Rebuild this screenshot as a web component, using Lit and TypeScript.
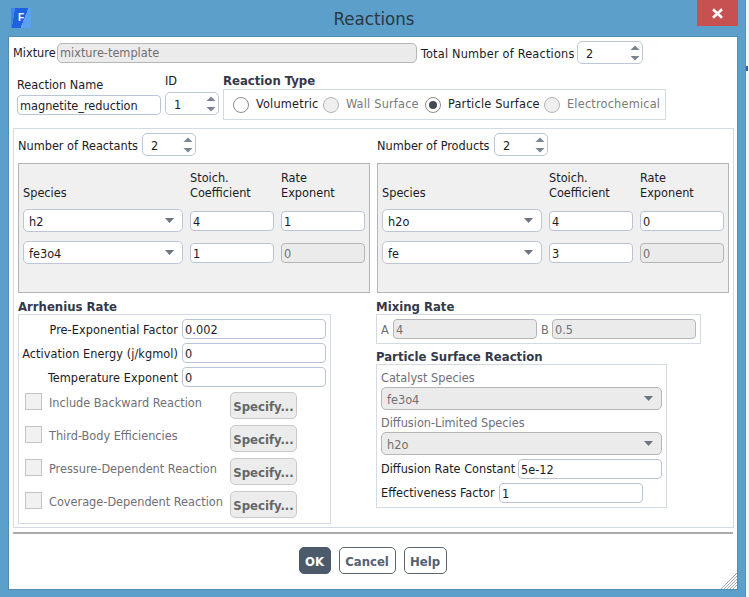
import { LitElement, html, css, svg } from "lit";
import { customElement } from "lit/decorators.js";

const spin = (v: string, cls = "") => html`<div class="spin ${cls}"><span>${v}</span>
  <svg width="10" height="16" viewBox="0 0 10 16"><path d="M5 0.5 9.5 5H.5Z" fill="#7a8492"/><path d="M.5 11H9.5L5 15.5Z" fill="#7a8492"/></svg></div>`;
const sel = (v: string, dis = false, cls = "") => html`<div class="sel ${dis ? "dis" : ""} ${cls}"><span>${v}</span>
  <svg width="9" height="5" viewBox="0 0 9 5"><path d="M0 0H9L4.5 5Z" fill="#6d7480"/></svg></div>`;
const inp = (v: string, dis = false, cls = "") => html`<div class="inp ${dis ? "dis" : ""} ${cls}">${v}</div>`;
const radio = (l: string, cls: string, state = "") => html`<div class="radio ${cls} ${state}"><i></i><span>${l}</span></div>`;

const table = (rows: [string, string, string, boolean][]) => html`<div class="table">
  <div class="th sp">Species</div><div class="th">Stoich.<br />Coefficient</div><div class="th">Rate<br />Exponent</div>
  ${rows.map(([a, b, c, d]) => html`${sel(a)}${inp(b)}${inp(c, d)}`)}
</div>`;

const check = (l: string) => html`<div class="chk"><i></i><span>${l}</span><button>Specify...</button></div>`;

@customElement("app-root")
export class AppRoot extends LitElement {
  static styles = css`
    :host { display: flex; width: 749px; height: 597px; background: #f4f6f6; overflow: hidden;
      font: 12.6px/14px "DejaVu Sans Condensed", "DejaVu Sans", sans-serif; font-stretch: condensed; color: #1b1b26; }
    * { box-sizing: border-box; }
    .win { width: 746px; height: 597px; background: #5b9fca; padding: 0 8px 8px 9px; display: flex; flex-direction: column; border-right: 1px solid #5593bb; flex: none; }
    .strip { flex: 1; padding-top: 66px; }
    .strip i { display: block; width: 2px; height: 5px; background: #2f5f9e; }
    .bar { height: 37px; margin: 0 -1px 0 0; display: grid; grid-template-columns: 1fr auto 1fr; }
    .logo { width: 20px; height: 20px; margin: 8px 0 0 2px; display: flex; align-items: center; justify-content: center;
      background: linear-gradient(100deg, #3f86ea 0 18%, transparent 18%), linear-gradient(112deg, #1f62e0 0 62%, #5aa2f0 62%); color: #fff; font: bold 10px/10px "Liberation Sans", sans-serif; }
    .title { font: 18.5px/37px "DejaVu Sans Condensed", "DejaVu Sans", sans-serif; font-stretch: condensed; color: #2b3742; padding-left: 1px; }
    .x { justify-self: end; width: 41px; height: 26px; background: #c75050; display: flex; align-items: center; justify-content: center; }
    .body { position: relative; flex: 1; background: #fff; padding: 4px 4px 0; display: flex; flex-direction: column; box-shadow: 0 0 0 1px #4f8db5; }
    .r1 { display: flex; align-items: center; height: 23px; }
    .r1 .l1 { width: 44px; white-space: nowrap; }
    .r1 .inp { width: 360px; border-radius: 5px; color: #222; line-height: 18px; }
    .r1 .l2 { width: 160px; padding: 2px 0 0 4px; white-space: nowrap; letter-spacing: .2px; }
    .r1 .spin { width: 66px; }
    .r2 { height: 64px; display: flex; padding-left: 4px; gap: 4px; }
    .c1 { width: 144px; padding-top: 14px; display: flex; flex-direction: column; gap: 3px; }
    .c2 { width: 54px; padding-top: 9px; display: flex; flex-direction: column; gap: 5px; }
    .c2 > span { display: block; height: 14px; line-height: 16px; }
    .c3 { width: 443px; padding-top: 9px; display: flex; flex-direction: column; gap: 2px; }
    b { display: block; height: 14px; line-height: 16px; font-weight: bold; font-size: 13px; color: #33394a; white-space: nowrap; }
    .rt { height: 31px; border: 1px solid #d3dae6; display: flex; align-items: center; padding-left: 9px; }
    .radio { display: flex; align-items: center; gap: 7px; white-space: nowrap; letter-spacing: .2px; }
    .radio span { margin-top: -1px; }
    .radio i { width: 16px; height: 16px; border-radius: 50%; border: 1px solid #8f8f8f; background: #fff; display: flex; align-items: center; justify-content: center; flex: none; }
    .radio.dis i { background: #efefef; border-color: #b4b4b4; }
    .radio.dis { color: #7a7a7a; }
    .radio.on i::after { content: ""; width: 8px; height: 8px; border-radius: 50%; background: #454a52; }
    .rv { width: 90px; } .rw { width: 102px; } .rp { width: 119px; }
    .spin { height: 23px; border: 1px solid #bcc6d6; border-radius: 5px; background: #fff; display: flex; align-items: center; justify-content: space-between; padding: 0 2px 0 8px; }
    .spin > span, .sel > span { padding-top: 2px; }
    .inp { height: 20px; width: 144px; border: 1px solid #b9c4d6; border-radius: 4px; background: #fff; line-height: 20px; padding-left: 2px; flex: none; }
    .inp.dis { background: #ebebeb; border-color: #b6b6b6; color: #707070; }
    .sel { height: 23px; border: 1px solid #bcc6d6; border-radius: 5px; background: #fff; display: flex; align-items: center; justify-content: space-between; padding: 0 8px 0 5px; }
    .sel.dis { background: #ebebeb; border-color: #b6b6b6; color: #707070; }
    .main { height: 400px; width: 721px; border: 1px solid #d3dae6; padding: 4px; }
    .top { display: flex; gap: 7px; }
    .side { width: 352px; }
    .num { display: flex; align-items: center; height: 23px; margin-bottom: 7px; }
    .num .spin { width: 54px; }
    .num span.lb { width: 124px; padding-top: 2px; white-space: nowrap; }
    .num.p span.lb { width: 117px; }
    .table { height: 130px; background: #f0f0f0; border: 1px solid #b4b4b4; padding: 6px 4px 0; display: grid; grid-template-columns: 160px 84px 84px; column-gap: 7px; row-gap: 9px; grid-template-rows: 30px 23px 23px; align-items: center; align-content: start; }
    .th { line-height: 15px; align-self: start; white-space: nowrap; }
    .th.sp { padding-top: 15px; }
    .table .inp { width: 84px; }
    .bot { display: flex; margin-top: 6px; }
    .lc { width: 358px; }
    .rc { width: 340px; }
    .hd { height: 15px; }
    .arr { width: 313px; height: 210px; border: 1px solid #d3dae6; padding: 4px; display: flex; flex-direction: column; }
    .fr { display: flex; justify-content: flex-end; gap: 4px; height: 20px; line-height: 22px; margin-bottom: 4px; white-space: nowrap; letter-spacing: .06px; }
    .chks { display: flex; flex-direction: column; gap: 6px; padding-left: 2px; margin-top: 1px; }
    .chk { display: grid; grid-template-columns: 17px 174px 67px; column-gap: 7px; height: 27px; color: #6f6f78; }
    .chk i { width: 17px; height: 17px; margin-top: 1px; border: 1px solid #c4c4c4; background: #f1f1f1; }
    .chk span { padding-top: 4px; white-space: nowrap; }
    .chk button { width: 67px; height: 27px; margin: 0; padding: 2px 0 0; border: 1px solid #c9c9c9; border-radius: 5px; background: #ececec; color: #666; font: bold 13px/23px "DejaVu Sans Condensed", "DejaVu Sans", sans-serif; font-stretch: condensed; }
    .mix { width: 325px; height: 30px; border: 1px solid #d3dae6; padding: 4px; display: flex; color: #6f6f78; line-height: 22px; }
    .mix .a { width: 12px; } .mix .b { width: 15px; padding-left: 4px; }
    .hd2 { margin-top: 5px; height: 15px; }
    .psr { width: 291px; height: 144px; border: 1px solid #d3dae6; padding: 0 4px; display: flex; flex-direction: column; }
    .psr .g { color: #6f6f78; margin-top: 6px; margin-bottom: 2px; height: 14px; line-height: 14px; white-space: nowrap; }
    .psr .fld { display: flex; height: 20px; line-height: 20px; margin-top: 4px; white-space: nowrap; }
    .psr .f1 { width: 137px; } .psr .f2 { width: 118px; }
    .sep { height: 2px; background: #ababab; margin-top: 4px; }
    .foot { display: flex; justify-content: center; gap: 8px; margin: 13px 0 0 -1px; }
    .foot button { height: 27px; margin: 0; padding: 2px 0 0; border: 1px solid #5a6572; border-radius: 5px; background: #fff; color: #566170; font: bold 13px/23px "DejaVu Sans Condensed", "DejaVu Sans", sans-serif; font-stretch: condensed; }
    .foot .ok { width: 32px; background: #4c5a6c; color: #fff; border-color: #4c5a6c; }
    .foot .ca { width: 57px; } .foot .he { width: 43px; }
    .grip { position: absolute; right: 0; bottom: 0; }
  `;

  render() {
    return html`<div class="win">
      <div class="bar">
        <div><div class="logo">F</div></div>
        <div class="title">Reactions</div>
        <div class="x"><svg width="13" height="11" viewBox="0 0 13 11"><path d="M2 1.2 11 9.8M11 1.2 2 9.8" stroke="#fff" stroke-width="2.6"/></svg></div>
      </div>
      <div class="body">
        <div class="r1"><span class="l1">Mixture</span>${inp("mixture-template", true)}<span class="l2">Total Number of Reactions</span>${spin("2")}</div>
        <div class="r2">
          <div class="c1"><span>Reaction Name</span>${inp("magnetite_reduction")}</div>
          <div class="c2"><span>ID</span>${spin("1")}</div>
          <div class="c3"><b>Reaction Type</b>
            <div class="rt">${radio("Volumetric", "rv")}${radio("Wall Surface", "rw", "dis")}${radio("Particle Surface", "rp", "on")}${radio("Electrochemical", "", "dis")}</div>
          </div>
        </div>
        <div class="main">
          <div class="top">
            <div class="side"><div class="num"><span class="lb">Number of Reactants</span>${spin("2")}</div>
              ${table([["h2", "4", "1", false], ["fe3o4", "1", "0", true]])}</div>
            <div class="side"><div class="num p"><span class="lb">Number of Products</span>${spin("2")}</div>
              ${table([["h2o", "4", "0", false], ["fe", "3", "0", true]])}</div>
          </div>
          <div class="bot">
            <div class="lc">
              <div class="hd"><b>Arrhenius Rate</b></div>
              <div class="arr">
                <div class="fr"><span>Pre-Exponential Factor</span>${inp("0.002")}</div>
                <div class="fr"><span>Activation Energy (j/kgmol)</span>${inp("0")}</div>
                <div class="fr"><span>Temperature Exponent</span>${inp("0")}</div>
                <div class="chks">
                  ${check("Include Backward Reaction")}${check("Third-Body Efficiencies")}${check("Pressure-Dependent Reaction")}${check("Coverage-Dependent Reaction")}
                </div>
              </div>
            </div>
            <div class="rc">
              <div class="hd"><b>Mixing Rate</b></div>
              <div class="mix"><span class="a">A</span>${inp("4", true)}<span class="b">B</span>${inp("0.5", true)}</div>
              <div class="hd2"><b>Particle Surface Reaction</b></div>
              <div class="psr">
                <div class="g">Catalyst Species</div>${sel("fe3o4", true)}
                <div class="g">Diffusion-Limited Species</div>${sel("h2o", true)}
                <div class="fld"><span class="f1">Diffusion Rate Constant</span>${inp("5e-12")}</div>
                <div class="fld"><span class="f2">Effectiveness Factor</span>${inp("1")}</div>
              </div>
            </div>
          </div>
        </div>
        <div class="sep"></div>
        <div class="foot"><button class="ok">OK</button><button class="ca">Cancel</button><button class="he">Help</button></div>
        <svg class="grip" width="16" height="16" viewBox="0 0 16 16">${[0, 3, 6, 9, 12].map((o) => svg`<path d="M${o} 16 16 ${o}" stroke="#a2a9b2" stroke-width="1"/>`)}</svg>
      </div>
    </div>
    <div class="strip"><i></i></div>`;
  }
}
